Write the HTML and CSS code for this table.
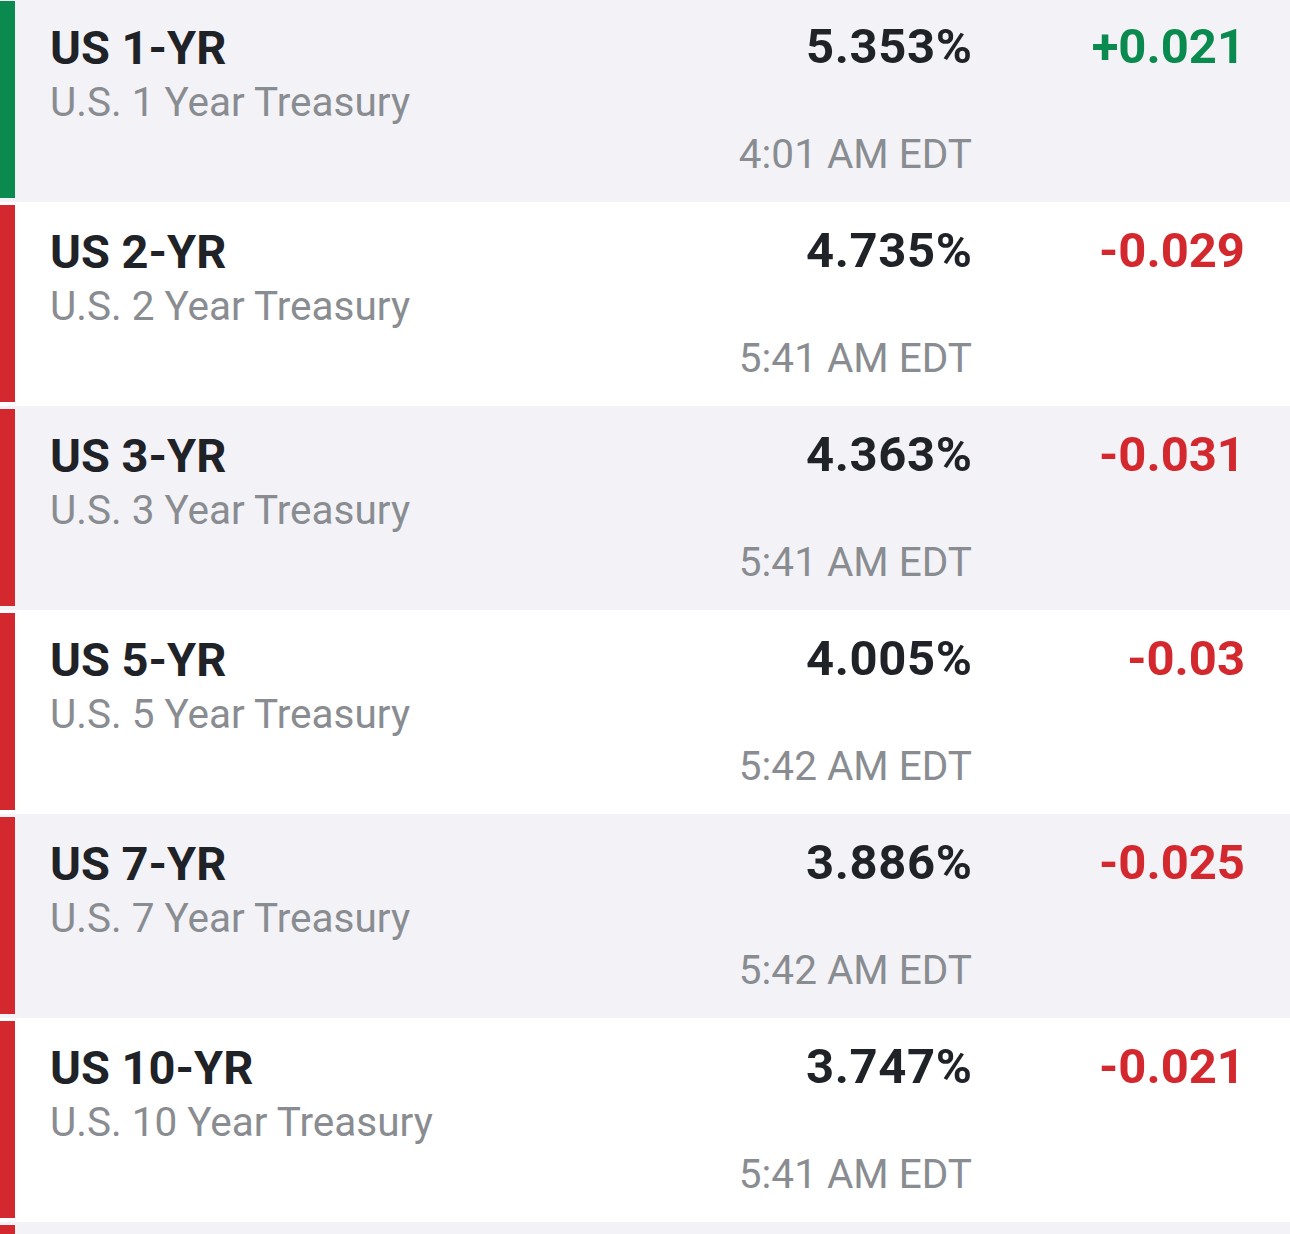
FILE: index.html
```html
<!DOCTYPE html>
<html>
<head>
<meta charset="utf-8">
<link rel="stylesheet" href="styles.css">
</head>
<body>
<div class="list">
  <div class="row alt">
    <div class="bar up"></div>
    <div class="info"><div class="sym">US 1-YR</div><div class="name">U.S. 1 Year Treasury</div></div>
    <div class="quote"><div class="price">5.353%</div><div class="time">4:01 AM EDT</div></div>
    <div class="chg up">+0.021</div>
  </div>
  <div class="row">
    <div class="bar down"></div>
    <div class="info"><div class="sym">US 2-YR</div><div class="name">U.S. 2 Year Treasury</div></div>
    <div class="quote"><div class="price">4.735%</div><div class="time">5:41 AM EDT</div></div>
    <div class="chg down">-0.029</div>
  </div>
  <div class="row alt">
    <div class="bar down"></div>
    <div class="info"><div class="sym">US 3-YR</div><div class="name">U.S. 3 Year Treasury</div></div>
    <div class="quote"><div class="price">4.363%</div><div class="time">5:41 AM EDT</div></div>
    <div class="chg down">-0.031</div>
  </div>
  <div class="row">
    <div class="bar down"></div>
    <div class="info"><div class="sym">US 5-YR</div><div class="name">U.S. 5 Year Treasury</div></div>
    <div class="quote"><div class="price">4.005%</div><div class="time">5:42 AM EDT</div></div>
    <div class="chg down">-0.03</div>
  </div>
  <div class="row alt">
    <div class="bar down"></div>
    <div class="info"><div class="sym">US 7-YR</div><div class="name">U.S. 7 Year Treasury</div></div>
    <div class="quote"><div class="price">3.886%</div><div class="time">5:42 AM EDT</div></div>
    <div class="chg down">-0.025</div>
  </div>
  <div class="row">
    <div class="bar down"></div>
    <div class="info"><div class="sym">US 10-YR</div><div class="name">U.S. 10 Year Treasury</div></div>
    <div class="quote"><div class="price">3.747%</div><div class="time">5:41 AM EDT</div></div>
    <div class="chg down">-0.021</div>
  </div>
  <div class="row alt tail">
    <div class="bar down"></div>
  </div>
</div>
</body>
</html>
```
FILE: styles.css
```css
html, body {
  margin: 0;
  padding: 0;
  background: #ffffff;
}
body {
  font-family: Roboto, "Liberation Sans", sans-serif;
  overflow: hidden;
}
.list {
  margin-top: -2px;
}
.row {
  display: flex;
  height: 204px;
  background: #ffffff;
}
.row.alt {
  background: #f3f3f7;
}
.bar {
  width: 15px;
  margin: 3px 0 4px;
  flex: none;
}
.bar.up { background: #0b8a4f; }
.bar.down { background: #d3282e; }
.info {
  flex: 1;
  padding-left: 35px;
  padding-top: 20px;
}
.sym {
  font-size: 47px;
  font-weight: 700;
  line-height: 60px;
  color: #1f2227;
}
.name {
  font-size: 40.5px;
  line-height: 48px;
  color: #898c90;
}
.quote {
  display: flex;
  flex-direction: column;
  align-items: flex-end;
  justify-content: space-between;
  padding-top: 19px;
  padding-bottom: 24px;
}
.price {
  font-size: 49px;
  font-weight: 700;
  line-height: 60px;
  letter-spacing: 0.6px;
  margin-right: -0.6px;
  color: #1f2227;
}
.time {
  font-size: 40.5px;
  line-height: 48px;
  color: #898c90;
}
.chg {
  width: 318px;
  padding-right: 45px;
  padding-top: 19px;
  box-sizing: border-box;
  text-align: right;
  font-size: 49px;
  font-weight: 700;
  line-height: 60px;
  flex: none;
}
.chg.up { color: #0b8a4f; }
.chg.down { color: #d3282e; }
```
